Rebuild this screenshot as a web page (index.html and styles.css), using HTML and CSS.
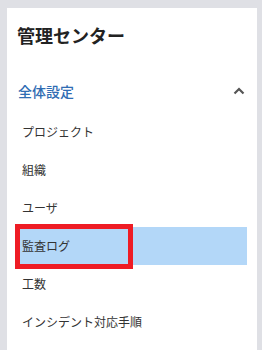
FILE: index.html
```html
<!DOCTYPE html>
<html lang="ja">
<head>
<meta charset="utf-8">
<link rel="stylesheet" href="styles.css">
</head>
<body>
<nav class="panel">
  <h1 class="title">管理センター</h1>
  <div class="section-head">
    <span class="section-label">全体設定</span>
    <svg class="chevron" width="12" height="8" viewBox="0 0 12 8"><path d="M1.5 6.5 L6 2 L10.5 6.5" fill="none" stroke="#555" stroke-width="2.2"/></svg>
  </div>
  <ul class="menu">
    <li class="item">プロジェクト</li>
    <li class="item">組織</li>
    <li class="item">ユーザ</li>
    <li class="item active">監査ログ<span class="mark"></span></li>
    <li class="item">工数</li>
    <li class="item">インシデント対応手順</li>
  </ul>
</nav>
</body>
</html>
```
FILE: styles.css
```css
html, body {
  margin: 0;
  padding: 0;
}
body {
  background: #dfe0e5;
  padding: 8px 5px 0 7px;
  height: 350px;
  box-sizing: border-box;
  overflow: hidden;
  font-family: "Noto Sans CJK JP", "Noto Sans", sans-serif;
  color: #333;
}
.panel {
  background: #fff;
  height: 100%;
  padding: 14px 10px 0 8px;
  box-sizing: border-box;
}
.title {
  margin: 0 0 0 2px;
  font-size: 18px;
  font-weight: 700;
  line-height: 26px;
  color: #222;
}
.section-head {
  margin-top: 22px;
  height: 42px;
  padding-bottom: 1px;
  display: flex;
  align-items: center;
  justify-content: space-between;
  padding-left: 3px;
  padding-right: 1px;
}
.section-label {
  font-size: 14px;
  color: #2f6cb3;
  font-weight: 500;
}
.chevron {
  display: block;
  margin-right: 1px;
}
.menu {
  list-style: none;
  margin: 0;
  padding: 0;
}
.item {
  position: relative;
  height: 38px;
  line-height: 38px;
  padding-left: 7px;
  font-size: 12px;
  color: #333;
}
.item.active {
  background: #b3d7f8;
}
.mark {
  position: absolute;
  left: 0;
  top: -3px;
  width: 118px;
  height: 45px;
  border: 5px solid #ee1c25;
  box-sizing: border-box;
}
```
